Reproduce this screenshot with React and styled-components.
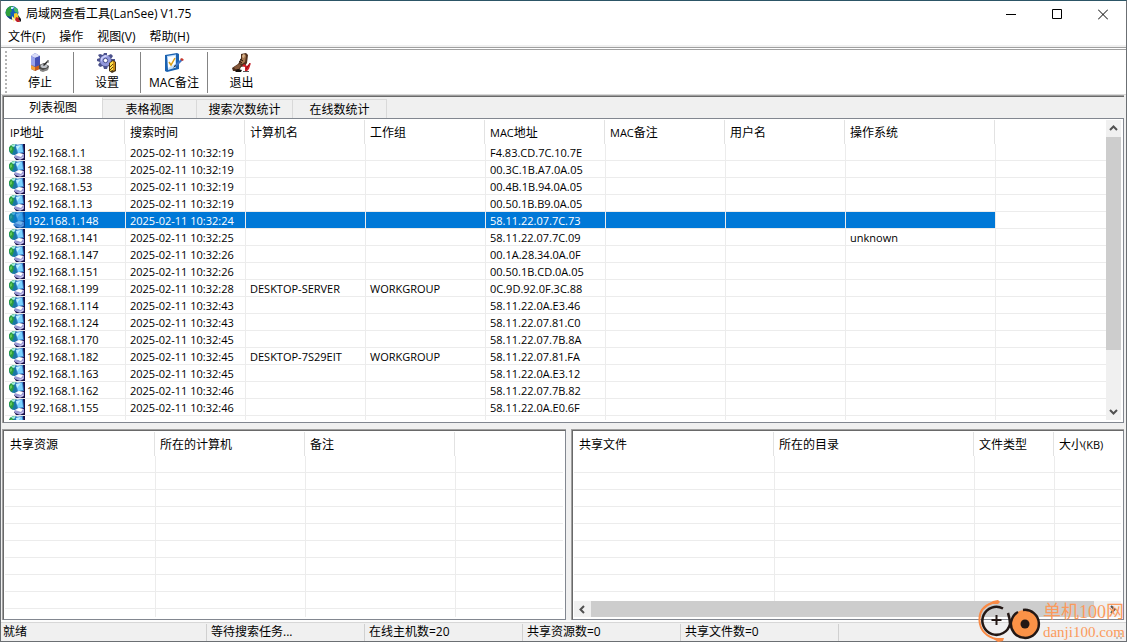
import { useState } from "react";
import styled, { createGlobalStyle, css } from "styled-components";

const GlobalStyle = createGlobalStyle`
    * {
        box-sizing: border-box;
    }

    body {
        margin: 0;
        overflow: hidden;
        background: #fff;
        color: #000;
        font: 12px/16px "Open Sans", "Noto Sans CJK SC", sans-serif;
    }

    button {
        border: none;
        padding: 0;
        background: none;
        color: inherit;
        font: inherit;
    }
`;

const Window = styled.div`
    position: relative;
    height: 100vh;
    display: flex;
    flex-direction: column;
    border: 1px solid #6b6f73;
    border-top-color: #2c5566;
    background: #fff;
`;

const TitleBar = styled.header`
    flex: none;
    height: 26px;
    display: flex;
    align-items: center;
    padding-left: 4px;
`;

const WindowTitle = styled.h1`
    flex: 1;
    margin: 0 0 0 4px;
    font-size: 12px;
    font-weight: 400;
`;

const WindowButton = styled.button`
    width: 46px;
    height: 24px;
    display: grid;
    place-items: center;
`;

const MenuBar = styled.nav`
    flex: none;
    height: 20px;
    display: flex;
    align-items: center;
    gap: 14px;
    padding: 2px 0 0 7px;
    border-bottom: 2px solid #f0f0f0;
`;

const ToolBar = styled.div`
    flex: none;
    height: 48px;
    display: flex;
    padding: 1px 0 0 4px;
    border-top: 1px solid #a0a0a0;
    border-bottom: 1px solid #d8d8d8;
`;

const Grip = styled.div`
    width: 2px;
    margin: 2px 0 0;
    background: repeating-linear-gradient(#b4b4b4 0 2px, #fff 2px 4px);
`;

const ToolList = styled.div`
    flex: 1;
    display: flex;
    padding-top: 3px;
    background: linear-gradient(#a0a0a0, #a0a0a0) 5px 0 / 100% 1px no-repeat;
`;

const ToolButton = styled.button`
    width: 67px;
    height: 41px;
    display: flex;
    flex-direction: column;
    align-items: center;
    gap: 2px;
    padding-top: 1px;
    border-right: 1px solid #848484;

    &:last-child {
        border-right: none;
    }
`;

const Workspace = styled.main`
    flex: 1;
    min-height: 0;
    display: grid;
    grid-template-rows: minmax(0, 328fr) minmax(0, 191fr);
    row-gap: 6px;
    padding: 0 2px 0 1px;
    background: #f0f0f0;
`;

const Pane = styled.section`
    min-width: 0;
    min-height: 0;
    display: flex;
    flex-direction: column;
    border-top: 1px solid #a0a0a0;
    border-left: 1px solid #a0a0a0;

    & > * {
        border-left: 1px solid #696969;
    }

    & > :first-child {
        border-top: 1px solid #696969;
    }
`;

const Split = styled.div`
    min-height: 0;
    display: grid;
    grid-template-columns: minmax(0, 564fr) minmax(0, 553fr);
    column-gap: 5px;
`;

const TabStrip = styled.div`
    flex: none;
    height: 22px;
    display: flex;
    align-items: flex-end;
    background: #f0f0f0;
`;

const Tab = styled.button`
    width: ${({ $width }) => $width}px;
    height: 19px;
    padding-top: 1px;
    border: 1px solid #d9d9d9;
    border-width: 1px 1px 0 0;
    background: #f0f0f0;

    ${({ $active }) => $active && css`
        height: 21px;
        padding: 0;
        border-color: #fff #d9d9d9;
        background: #fff;
    `}
`;

const ListBox = styled.div`
    flex: 1;
    min-height: 0;
    display: flex;
    flex-direction: ${({ $column }) => ($column ? "column" : "row")};
    padding: 1px 2px 2px 1px;
    border-top: 1px solid ${({ $plain }) => ($plain ? "#696969" : "#828790")};
    border-right: 1px solid #828790;
    border-bottom: 1px solid #828790;
    background: #fff;
`;

const Viewport = styled.div`
    flex: 1;
    min-width: 0;
    min-height: 0;
    overflow: hidden;
`;

const Table = styled.table`
    width: 100%;
    table-layout: fixed;
    border-spacing: 0;
    font-size: 11px;
`;

const HeadCell = styled.th`
    height: 24px;
    padding: 2px 0 0 5px;
    border-right: 1px solid #e2e2e2;
    font-size: 12px;
    font-weight: 400;
    text-align: left;
    white-space: nowrap;

    &:last-child {
        border-right: none;
    }
`;

const Latin = styled.span`
    font-size: 11px;
`;

const Cell = styled.td`
    height: 17px;
    padding: 2px 0 0 4px;
    border-left: 1px solid #ececec;
    border-bottom: 1px solid #ececec;
    line-height: 14px;
    white-space: nowrap;
    overflow: hidden;

    &:first-child {
        padding: 0;
        border-left: none;
    }
`;

const Row = styled.tr`
    ${({ $selected }) => $selected && css`
        color: #fff;

        ${Cell}:not(:last-child) {
            background: #0078d7;
            background-clip: padding-box;
        }

        ${Cell}:first-child {
            background: linear-gradient(90deg, #fff 20px, #0078d7 20px) padding-box;
        }
    `}
`;

const Address = styled.span`
    display: flex;
    gap: 2px;
    height: 16px;
    padding-left: 4px;
    line-height: 18px;
`;

const ScrollTrack = styled.div`
    flex: none;
    display: flex;
    flex-direction: ${({ $across }) => ($across ? "row" : "column")};
    ${({ $across }) => ($across ? "height: 16px" : "width: 15px")};
    background: #f0f0f0;
`;

const ScrollButton = styled.button`
    flex: none;
    width: ${({ $across }) => ($across ? 17 : 15)}px;
    height: ${({ $across }) => ($across ? 16 : 17)}px;
    display: grid;
    place-items: center;
`;

const ScrollRail = styled.div`
    flex: 1;
    display: flex;
    flex-direction: inherit;
`;

const ScrollThumb = styled.div`
    flex: 0 0 ${({ $size }) => $size}%;
    background: #cdcdcd;
`;

const StatusBar = styled.footer`
    flex: none;
    height: 21px;
    display: flex;
    align-items: flex-end;
    border-top: 2px solid #fcfcfc;
    background: #f0f0f0;
    box-shadow: inset 0 1px #d7d7d7;
`;

const StatusItem = styled.span`
    width: ${({ $width }) => $width}px;
    height: 17px;
    padding-left: ${({ $first }) => ($first ? 2 : 4)}px;
    border-right: 1px solid #d0d0d0;
    white-space: nowrap;
`;

const SizeGrip = styled.span`
    width: 10px;
    height: 10px;
    margin: 0 2px 2px auto;
    background: repeating-conic-gradient(#c0c0c0 0 25%, transparent 0 100%) 0 0 / 4px 4px;
    clip-path: polygon(100% 0, 100% 100%, 0 100%);
`;

const Watermark = styled.aside`
    position: absolute;
    right: 1px;
    bottom: -1px;
    display: flex;
    align-items: flex-end;
    gap: 1px;
    color: #fb9a5c;
    pointer-events: none;
`;

const WatermarkText = styled.p`
    margin: 0;
    font: 15px/20px "Liberation Serif", "Noto Sans CJK SC", serif;

    strong {
        display: block;
        font-size: 18px;
        font-weight: 400;
    }
`;

const HOSTS = [
	[ "192.168.1.1", "10:32:19", "F4.83.CD.7C.10.7E" ],
	[ "192.168.1.38", "10:32:19", "00.3C.1B.A7.0A.05" ],
	[ "192.168.1.53", "10:32:19", "00.4B.1B.94.0A.05" ],
	[ "192.168.1.13", "10:32:19", "00.50.1B.B9.0A.05" ],
	[ "192.168.1.148", "10:32:24", "58.11.22.07.7C.73" ],
	[ "192.168.1.141", "10:32:25", "58.11.22.07.7C.09", "", "unknown" ],
	[ "192.168.1.147", "10:32:26", "00.1A.28.34.0A.0F" ],
	[ "192.168.1.151", "10:32:26", "00.50.1B.CD.0A.05" ],
	[ "192.168.1.199", "10:32:28", "0C.9D.92.0F.3C.88", "DESKTOP-SERVER" ],
	[ "192.168.1.114", "10:32:43", "58.11.22.0A.E3.46" ],
	[ "192.168.1.124", "10:32:43", "58.11.22.07.81.C0" ],
	[ "192.168.1.170", "10:32:45", "58.11.22.07.7B.8A" ],
	[ "192.168.1.182", "10:32:45", "58.11.22.07.81.FA", "DESKTOP-7S29EIT" ],
	[ "192.168.1.163", "10:32:45", "58.11.22.0A.E3.12" ],
	[ "192.168.1.162", "10:32:46", "58.11.22.07.7B.82" ],
	[ "192.168.1.155", "10:32:46", "58.11.22.0A.E0.6F" ]
];

const HOST_COLUMNS = [
	[ "IP地址", 120 ],
	[ "搜索时间", 120 ],
	[ "计算机名", 120 ],
	[ "工作组", 120 ],
	[ "MAC地址", 120 ],
	[ "MAC备注", 120 ],
	[ "用户名", 120 ],
	[ "操作系统", 150 ],
	[ "" ]
];

const SHARE_COLUMNS = [ [ "共享资源", 150 ], [ "所在的计算机", 150 ], [ "备注", 150 ], [ "" ] ];

const FILE_COLUMNS = [ [ "共享文件", 200 ], [ "所在的目录", 200 ], [ "文件类型", 80 ], [ "大小(KB)" ] ];

const TABS = [ [ "列表视图", 99 ], [ "表格视图", 94 ], [ "搜索次数统计", 96 ], [ "在线数统计", 94 ] ];

const AppIcon = () => (
	<svg width="17" height="17" viewBox="0 0 17 17" aria-hidden="true">
		<circle cx="7" cy="6.5" r="6.5" fill="#1560b8" />
		<path d="M1 5C2 1 5 0 8 0L6 3l1 2-2 2 1 2-2 2C1 10 0 8 1 5z" fill="#2fa03c" />
		<path d="M9 1l4 2 0 4-3-1-1-2z" fill="#43b86a" />
		<path d="M6 1h3l-1 2-2 0z" fill="#c8f0ff" />
		<path d="M2 10l4 1 2 3-3-1z" fill="#123d78" />
		<path d="M9 7.5l3-.5 2 4-2 3-3-2z" fill="#f4cf28" />
		<path d="M7 10l3 3-1 3-2-3z" fill="#fff2a0" />
		<path d="M11 11l3 1 1 4h-3l-2-2z" fill="#c2222a" />
		<path d="M13 9l3 4v3l-2-2z" fill="#16181c" />
	</svg>
);

const HostIcon = ({ selected }) => (
	<svg width="16" height="16" viewBox="0 0 16 16" aria-hidden="true">
		<path d="M14 0h2v16H7l-2-3 4-1z" fill="#160c42" />
		<circle cx="5.5" cy="5.5" r="5.5" fill="#1878a4" />
		<path d="M0 4C1 1 4 0 6 0L4 2l1 3-1 3-1 2C1 9 0 7 0 4z" fill="#2c9c3e" />
		<path d="M2 1l4-1 1 2-3 1z" fill="#a6f0dc" />
		<path d="M1 4l2-1v3l-2 1z" fill="#64c858" />
		<path d="M6 1l8-1 1 9-7 1z" fill="#3078c4" />
		<path d="M7 2l6-1 1 7-5 1z" fill="#7ad2ff" />
		<path d="M7 2l5-1-4 5z" fill="#c0f0ff" />
		<path d="M5 12l4-3 6 1v4l-4 2-5-2z" fill="#9a98d4" />
		<path d="M6 11l4-2 4 1-2 3z" fill="#fff" />
		<path d="M7 14l3 1 4-2v1l-3 1z" fill="#e8e6fa" />
		{selected && <path d="M0 5C0 2 3 0 6 0h10v16H7l-3-3 1-2C2 11 0 9 0 5z" fill="#0078d7" opacity=".55" />}
	</svg>
);

const StopIcon = () => (
	<svg width="20" height="20" viewBox="0 0 20 20" aria-hidden="true">
		<path d="M1 3l4-3 5 3v12l-5 3-4-2z" fill="#5360b8" />
		<path d="M1 3l4-3 5 3-5 2z" fill="#d9dcf8" />
		<path d="M1 3l4 2v8l-4-1z" fill="#99a3ec" />
		<path d="M5 5l5-2v9l-5 2z" fill="#4450b4" />
		<path d="M1 12l4 2v4l-4-2z" fill="#f6a53a" />
		<path d="M5 14l5-2v4l-5 2z" fill="#c85c1c" />
		<path d="M9 12l5-2 5 3-1 4-5 1-4-2z" fill="#4b4b4b" />
		<ellipse cx="14" cy="13" rx="3.5" ry="2" fill="#bfc2c8" />
		<path d="M13 12l5-5 1 1-5 5z" fill="#222" />
		<path d="M10 16l3 1 5-2v2l-5 2-3-1z" fill="#858585" />
		<path d="M17 9l2-2v3z" fill="#999" />
	</svg>
);

const SettingsIcon = () => (
	<svg width="20" height="20" viewBox="0 0 20 20" aria-hidden="true">
		<path d="M7 0h3v3l2-1 2-1 2 2-2 3 4 0v3h-3l-1 1 2 3-2 2-3-2-1 3H7l-1-3-3 1-2-2 2-3-3-1V6l3-1-2-3 2-1 3 1z" fill="#4c528c" />
		<circle cx="8.5" cy="7.5" r="5.5" fill="#9298dc" />
		<path d="M4 5l4-3 3 1-5 2-2 4z" fill="#ced2fb" />
		<circle cx="8.5" cy="7.5" r="2.2" fill="#fff" stroke="#474d8c" />
		<path d="M12 10l4-3 3 2v9l-4 2-3-2z" fill="#4a3516" />
		<path d="M13 10l3-2v9l-3 1z" fill="#ffe14b" />
		<path d="M16 8l2 1v8l-2 1z" fill="#c98c16" />
		<path d="M13 14l3-3M13 17l3-3" stroke="#6b4610" />
	</svg>
);

const NoteIcon = () => (
	<svg width="20" height="20" viewBox="0 0 20 20" aria-hidden="true">
		<path d="M1 2l12-2 2 1v15L3 19l-2-1z" fill="#1c62b0" />
		<path d="M3 3l9-1.5v13L4 17z" fill="#c4e2ff" />
		<path d="M4 4l7-1v8l-7 4z" fill="#fff" />
		<path d="M5 9l2 3 4-7" fill="none" stroke="#dba018" strokeWidth="1.5" />
		<path d="M11 12l6-6 2 1-6 6-3 1z" fill="#3f77c9" />
		<path d="M16 6l2-1 2 2-2 1z" fill="#c8382c" />
		<path d="M9 15l2-3 1 1z" fill="#222" />
	</svg>
);

const ExitIcon = () => (
	<svg width="20" height="20" viewBox="0 0 20 20" aria-hidden="true">
		<path d="M9 1l5-1 2 2-1 8-2 3-4 1-2 4H1l-1-3 6-4 3-5z" fill="#4f2f1c" />
		<path d="M10 2l3-1 1 2-1 6-3 2-2-1 2-4z" fill="#a47750" />
		<path d="M2 14l5-3 2 1-2 4H3z" fill="#85583a" />
		<path d="M11 1l2 1-1 3-2-1z" fill="#d8b48c" />
		<path d="M3 18l3-2 4 1-1 2H4z" fill="#17100c" />
		<path d="M7 8l3 2M8 6l3 2" stroke="#241206" />
		<path d="M13 18v-4l-3-1 2-2 3 2 4-3-2 6-3 3z" fill="#d01c26" />
		<path d="M14 16l4-6" stroke="#8a0c14" />
		<path d="M11 18h6v1h-6z" fill="#555" />
	</svg>
);

const TOOLS = [
	[ "停止", StopIcon ],
	[ "设置", SettingsIcon ],
	[ "MAC备注", NoteIcon ],
	[ "退出", ExitIcon ]
];

const WindowGlyph = ({ d }) => (
	<svg width="10" height="11" viewBox="0 0 10 11" fill="none" stroke="#000" aria-hidden="true">
		<path d={d} />
	</svg>
);

const Arrow = ({ turn, ...rest }) => (
	<ScrollButton {...rest}>
		<svg width="9" height="9" viewBox="0 0 9 9" aria-hidden="true">
			<path d="M1 6l3.5-3.5L8 6" transform={`rotate(${turn} 4.5 4.5)`} fill="none" stroke="#505050" strokeWidth="2" />
		</svg>
	</ScrollButton>
);

const Scrollbar = ({ across, size }) => (
	<ScrollTrack $across={across}>
		<Arrow $across={across} turn={across ? -90 : 0} aria-label={across ? "向左" : "向上"} />
		<ScrollRail>
			<ScrollThumb $size={size} />
		</ScrollRail>
		<Arrow $across={across} turn={across ? 90 : 180} aria-label={across ? "向右" : "向下"} />
	</ScrollTrack>
);

const Columns = ({ columns }) => (
	<>
		<colgroup>
			{columns.map(([ name, width ]) => <col key={name} width={width} />)}
		</colgroup>
		<thead>
			<tr>
				{columns.map(([ name ]) => (
					<HeadCell key={name}>
						{name.split(/([A-Z()]+)/).map((part, i) => (i % 2 ? <Latin key={i}>{part}</Latin> : part))}
					</HeadCell>
				))}
			</tr>
		</thead>
	</>
);

const EmptyTable = ({ columns }) => (
	<Viewport>
		<Table>
			<Columns columns={columns} />
			<tbody>
				{Array.from({ length: 12 }, (_, row) => (
					<Row key={row}>
						{columns.map(([ name ]) => <Cell key={name} />)}
					</Row>
				))}
			</tbody>
		</Table>
	</Viewport>
);

const HostTable = () => {
	const [ selected, setSelected ] = useState("192.168.1.148");

	return (
		<Viewport>
			<Table>
				<Columns columns={HOST_COLUMNS} />
				<tbody>
					{HOSTS.map(([ ip, time, mac, name, system ]) => (
						<Row key={ip} $selected={ip === selected} onClick={() => setSelected(ip)}>
							<Cell>
								<Address>
									<HostIcon selected={ip === selected} />
									{ip}
								</Address>
							</Cell>
							<Cell>2025-02-11 {time}</Cell>
							<Cell>{name}</Cell>
							<Cell>{name && "WORKGROUP"}</Cell>
							<Cell>{mac}</Cell>
							<Cell />
							<Cell />
							<Cell>{system}</Cell>
							<Cell />
						</Row>
					))}
					<Row>
						<Cell><Address><HostIcon /></Address></Cell>
						{HOST_COLUMNS.slice(1).map(([ name ]) => <Cell key={name} />)}
					</Row>
				</tbody>
			</Table>
		</Viewport>
	);
};

const WatermarkLogo = () => (
	<svg width="64" height="42" viewBox="0 0 64 42" fill="none" aria-hidden="true">
		<path d="M14 3C5 6 1 13 1.500 21c.5 9 7 16 17 18" stroke="#f98a45" strokeWidth="2" />
		<path d="M9 5l6-4 5-1 2 2-2 2-5 0zM14 38l12 0-1 3-5 1z" fill="#f98a45" />
		<path d="M25 8.500A14 14 0 1 0 32 24c0-4-1-8-2-11" stroke="#231815" strokeWidth="2.500" />
		<path d="M18.500 15v10M13.500 20h10" stroke="#231815" strokeWidth="2" />
		<circle cx="47" cy="24" r="14" fill="#fb9247" />
		<path d="M45 10a14 14 0 1 1-12 12c1-5 3-8 7-10" stroke="#231815" strokeWidth="2.500" />
		<circle cx="47" cy="24" r="4.500" fill="#231815" />
	</svg>
);

const App = () => {
	const [ tab, setTab ] = useState("列表视图");

	return (
		<>
			<GlobalStyle />
			<Window>
				<TitleBar>
					<AppIcon />
					<WindowTitle>局域网查看工具(LanSee) V1.75</WindowTitle>
					<WindowButton aria-label="最小化"><WindowGlyph d="M0 5.5h10" /></WindowButton>
					<WindowButton aria-label="最大化"><WindowGlyph d="M.5.5h9v9h-9z" /></WindowButton>
					<WindowButton aria-label="关闭"><WindowGlyph d="M0 .5l10 10M10 .5l-10 10" /></WindowButton>
				</TitleBar>
				<MenuBar>
					<button>文件(F)</button>
					<button>操作</button>
					<button>视图(V)</button>
					<button>帮助(H)</button>
				</MenuBar>
				<ToolBar>
					<Grip />
					<ToolList>
						{TOOLS.map(([ label, Icon ]) => (
							<ToolButton key={label}>
								<Icon />
								{label}
							</ToolButton>
						))}
					</ToolList>
				</ToolBar>
				<Workspace>
					<Pane>
						<TabStrip role="tablist">
							{TABS.map(([ label, width ]) => (
								<Tab
									key={label}
									role="tab"
									aria-selected={label === tab}
									$active={label === tab}
									$width={width}
									onClick={() => setTab(label)}
								>
									{label}
								</Tab>
							))}
						</TabStrip>
						<ListBox>
							<HostTable />
							<Scrollbar size={80} />
						</ListBox>
					</Pane>
					<Split>
						<Pane>
							<ListBox $plain>
								<EmptyTable columns={SHARE_COLUMNS} />
							</ListBox>
						</Pane>
						<Pane>
							<ListBox $plain $column>
								<EmptyTable columns={FILE_COLUMNS} />
								<Scrollbar across size={98} />
							</ListBox>
						</Pane>
					</Split>
				</Workspace>
				<StatusBar>
					<StatusItem $first $width={206}>就绪</StatusItem>
					<StatusItem $width={158}>等待搜索任务...</StatusItem>
					<StatusItem $width={158}>在线主机数=20</StatusItem>
					<StatusItem $width={158}>共享资源数=0</StatusItem>
					<StatusItem $width={158}>共享文件数=0</StatusItem>
					<SizeGrip />
				</StatusBar>
				<Watermark>
					<WatermarkLogo />
					<WatermarkText>
						<strong>单机100网</strong>
						danji100.com
					</WatermarkText>
				</Watermark>
			</Window>
		</>
	);
};

export default App;
